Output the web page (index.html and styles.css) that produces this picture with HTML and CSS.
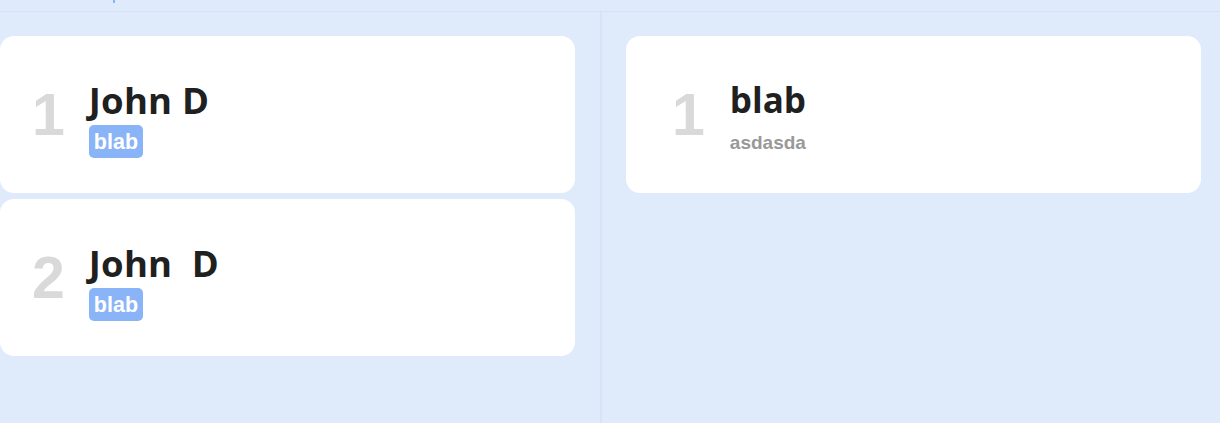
FILE: index.html
```html
<!DOCTYPE html>
<html lang="en">
<head>
<meta charset="utf-8">
<title>Board</title>
<link rel="stylesheet" href="styles.css">
</head>
<body>
<div class="topbar"><span class="tick"></span></div>
<main class="board">
  <section class="column column-left">
    <div class="card card-left">
      <div class="rank">1</div>
      <div class="info">
        <div class="title name">John D</div>
        <span class="badge">blab</span>
      </div>
    </div>
    <div class="card card-left">
      <div class="rank">2</div>
      <div class="info">
        <div class="title name">John&nbsp; D</div>
        <span class="badge">blab</span>
      </div>
    </div>
  </section>
  <section class="column column-right">
    <div class="card card-right">
      <div class="rank">1</div>
      <div class="info">
        <div class="title">blab</div>
        <div class="sub">asdasda</div>
      </div>
    </div>
  </section>
</main>
</body>
</html>
```
FILE: styles.css
```css
html, body {
  margin: 0;
  padding: 0;
}
body {
  background: #dfeafb;
  width: 1220px;
  height: 423px;
  overflow: hidden;
  font-family: "Liberation Sans", Arial, sans-serif;
}
.topbar {
  height: 11px;
  border-bottom: 1px solid #d4e2f8;
  display: flex;
}
.tick {
  display: block;
  margin-left: 113px;
  width: 2px;
  height: 3px;
  background: #8ab4f8;
}
.board {
  display: flex;
  height: 411px;
}
.column {
  display: flex;
  flex-direction: column;
  gap: 6px;
  padding-top: 24px;
  box-sizing: border-box;
}
.column-left {
  width: 600px;
  padding-right: 25px;
}
.column-right {
  flex: 1;
  border-left: 2px solid #d6e3f8;
  padding-left: 24px;
  padding-right: 19px;
}
.card {
  background: #ffffff;
  border-radius: 14px;
  min-height: 157px;
  box-sizing: border-box;
  padding-top: 43px;
  display: flex;
  align-items: flex-start;
}
.card-left {
  padding-left: 32px;
}
.card-right {
  padding-left: 46px;
}
.rank {
  align-self: center;
  margin-top: -43px;
  font-family: "Liberation Sans", Arial, sans-serif;
  font-weight: 700;
  font-size: 59px;
  line-height: 60px;
  color: #d9d9d9;
  margin-right: 24px;
}
.card-right .rank {
  margin-right: 25px;
}
.info {
  display: flex;
  flex-direction: column;
  align-items: flex-start;
}
.title {
  font-family: "Open Sans", "Noto Sans", sans-serif;
  font-weight: 700;
  font-size: 35px;
  line-height: 42px;
  color: #1e2120;
}
.name {
  font-size: 36.5px;
  letter-spacing: 0.2px;
}
.badge {
  margin-top: 4px;
  background: #8ab4f8;
  color: #ffffff;
  font-weight: 700;
  font-size: 21.5px;
  padding: 5px 5px 3px;
  border-radius: 5px;
}
.sub {
  margin-top: 11px;
  font-weight: 700;
  font-size: 19px;
  color: #999999;
}
```
